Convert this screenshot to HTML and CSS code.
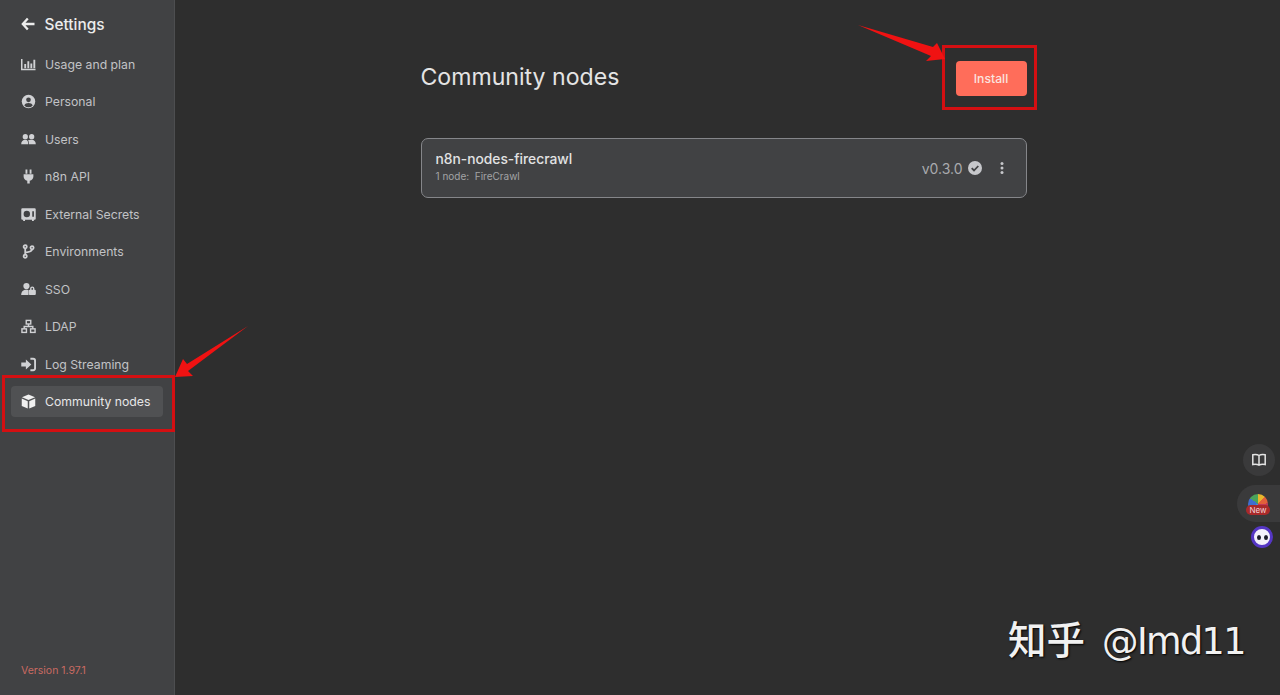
FILE: index.html
```html
<!DOCTYPE html>
<html lang="en">
<head>
<meta charset="utf-8">
<title>Community nodes</title>
<link rel="stylesheet" href="styles.css">
</head>
<body>
<div class="app">
  <aside class="sidebar">
    <div class="side-head">
      <svg class="back" viewBox="0 0 14 14"><path d="M6.800 1.400 1.800 7l5 5.600M2 7h11.500" fill="none" stroke="currentColor" stroke-width="2.300"/></svg>
      <span>Settings</span>
    </div>
    <nav class="menu">
      <a class="item"><svg class="ic" viewBox="0 0 16 16"><path d="M.8 2v11.200h14.700" fill="none" stroke="currentColor" stroke-width="1.600"/><path d="M3.500 7.500h2V12h-2zM6.800 4.500h2V12h-2zM10 7h2v5h-2zM13.200 3h2v9h-2z" fill="currentColor"/></svg>Usage and plan</a>
      <a class="item"><svg class="ic" viewBox="0 0 16 16"><circle cx="8" cy="8" r="7.200" fill="currentColor"/><circle cx="8" cy="6.200" r="2.500" fill="#414244"/><path d="M3.500 12.200c.8-1.800 2.400-2.500 4.500-2.500s3.700.7 4.500 2.500a6 6 0 0 1-9 0z" fill="#414244"/></svg>Personal</a>
      <a class="item"><svg class="ic" viewBox="0 0 16 16"><circle cx="4.600" cy="5" r="2.800" fill="currentColor"/><circle cx="11.400" cy="5" r="2.800" fill="currentColor"/><path d="M.2 13c0-3 1.800-4.700 4.400-4.700S7.700 10 7.700 13zM8.500 13c0-2-.4-3.400-1-4.200 1-.4 2.600-.6 3.900-.5 2.500 0 4.400 1.700 4.400 4.700z" fill="currentColor"/></svg>Users</a>
      <a class="item"><svg class="ic" viewBox="0 0 16 16"><path d="M4.800.5h2v4.500h-2zM9.200.5h2v4.500h-2zM2.800 5.500h10.400V8c0 2.500-1.600 4-3.900 4.400V15.500H6.700v-3.100C4.400 12 2.800 10.500 2.800 8z" fill="currentColor"/></svg>n8n API</a>
      <a class="item"><svg class="ic" viewBox="0 0 16 16"><path fill-rule="evenodd" d="M1.500 1.200h13a1.200 1.200 0 0 1 1.200 1.200v10a1.200 1.200 0 0 1-1.200 1.200h-.8v1.200h-2v-1.200H4.300v1.200h-2v-1.200h-.8a1.200 1.200 0 0 1-1.200-1.200v-10a1.200 1.200 0 0 1 1.200-1.200zM6.200 4a3.400 3.400 0 1 0 0 6.800 3.400 3.400 0 0 0 0-6.800zm5.800.500v5.800h1.800V4.500z" fill="currentColor"/></svg>External Secrets</a>
      <a class="item"><svg class="ic" viewBox="0 0 16 16"><g fill="none" stroke="currentColor" stroke-width="1.900"><circle cx="4.500" cy="2.900" r="1.700"/><circle cx="4.500" cy="13.100" r="1.700"/><circle cx="11.800" cy="4" r="1.700"/><path d="M4.500 4.600v6.800M11.800 5.600c0 2.400-3 3-7.300 3.600"/></g></svg>Environments</a>
      <a class="item"><svg class="ic" viewBox="0 0 16 16"><circle cx="5.800" cy="4.300" r="3.300" fill="currentColor"/><path d="M.2 13.800c0-3.500 2.200-5.500 5.600-5.500 1 0 1.700.2 2.200.4v5.100z" fill="currentColor"/><path fill-rule="evenodd" d="M9.300 8.300h.4V7a2.300 2.300 0 0 1 4.600 0v1.300h.5a1 1 0 0 1 1 .9v3.700a1 1 0 0 1-1 .9H9.300a1 1 0 0 1-1-.9V9.200a1 1 0 0 1 1-.9zm1.900 0h1.600V7a.8.8 0 0 0-1.600 0z" fill="currentColor"/></svg>SSO</a>
      <a class="item"><svg class="ic" viewBox="0 0 16 16"><g fill="none" stroke="currentColor" stroke-width="1.500"><rect x="5.600" y="1.500" width="4.800" height="3.800"/><rect x="1" y="10.500" width="4.800" height="3.800"/><rect x="10.200" y="10.500" width="4.800" height="3.800"/><path d="M8 5.300v2.700M3.400 10.500V8h9.200v2.500"/></g></svg>LDAP</a>
      <a class="item"><svg class="ic" viewBox="0 0 16 16"><path d="M.3 5.800h4.900V2.700L11 8l-5.800 5.300V10.200H.3z" fill="currentColor"/><path d="M10 1.900h3a2 2 0 0 1 2 2v8.200a2 2 0 0 1-2 2h-3" fill="none" stroke="currentColor" stroke-width="2"/></svg>Log Streaming</a>
      <a class="item active"><svg class="ic" viewBox="0 0 16 16"><path d="M8 .5 15 3.400 8 6.300 1 3.400z" fill="currentColor"/><path d="M.8 4.900l6.400 2.700v7.900L.8 12.800zM15.200 4.900 8.800 7.600v7.900l6.400-2.700z" fill="currentColor"/></svg>Community nodes</a>
    </nav>
    <div class="version">Version 1.97.1</div>
  </aside>

  <main class="main">
    <div class="content">
      <header class="page-head">
        <h1>Community nodes</h1>
        <button class="install">Install</button>
      </header>
      <section class="card">
        <div class="card-info">
          <div class="pkg">n8n-nodes-firecrawl</div>
          <div class="sub">1 node:&nbsp; FireCrawl</div>
        </div>
        <div class="card-meta">
          <span class="ver">v0.3.0</span>
          <svg class="check" viewBox="0 0 14 14"><circle cx="7" cy="7" r="7" fill="currentColor"/><path d="M3.700 7.200 6 9.500l4.300-4.500" fill="none" stroke="#414244" stroke-width="1.800"/></svg>
          <svg class="dots" viewBox="0 0 4 14"><circle cx="2" cy="2.500" r="1.500"/><circle cx="2" cy="7" r="1.500"/><circle cx="2" cy="11.500" r="1.500"/></svg>
        </div>
      </section>
    </div>
  </main>
</div>

<div class="mark mark-install"></div>
<div class="mark mark-nav"></div>
<svg class="arrows" viewBox="0 0 1280 695">
  <path d="M858 25 933 47 937 43 945 59 926 61 931 56z" fill="#f01212"/>
  <path d="M248 326 187 364 183 359 175 377 193 376 188 371z" fill="#f01212"/>
</svg>

<div class="float-book">
  <svg viewBox="0 0 16 16"><path d="M8 3.500C6.500 2.500 4 2.300 1.800 2.800v9.700c2.200-.5 4.700-.3 6.200.7 1.500-1 4-1.200 6.200-.7V2.800C12 2.300 9.500 2.500 8 3.500zM8 3.500v9.700" fill="none" stroke="currentColor" stroke-width="1.500"/></svg>
</div>
<div class="float-tray">
  <div class="ball"><span class="new">New</span></div>
</div>
<div class="bot"><i></i><i></i></div>

<div class="watermark"><span class="wm-cjk">知乎</span><span class="wm-id">@Imd11</span></div>
</body>
</html>
```
FILE: styles.css
```css
* { box-sizing: border-box; }
html, body { margin: 0; height: 100%; }
body {
  background: #2e2e2e;
  font-family: Inter, "Liberation Sans", sans-serif;
  overflow: hidden;
  position: relative;
}
.app { display: flex; height: 695px; }
.sidebar {
  width: 175px;
  flex: none;
  background: #414244;
  border-right: 1px solid #4d4e50;
  display: flex;
  flex-direction: column;
  padding: 0 11px 18px;
}
.side-head {
  height: 48.500px;
  display: flex;
  align-items: center;
  gap: 10px;
  padding-left: 9.500px;
  color: #ececec;
  font-size: 15.400px;
  font-weight: 500;
}
.back { width: 14px; height: 14px; }
.menu { display: flex; flex-direction: column; gap: 6.500px; flex: 1; }
.item {
  height: 31px;
  display: flex;
  align-items: center;
  gap: 9.500px;
  padding-left: 9.500px;
  border-radius: 4px;
  color: #c2c3c6;
  font-size: 12.250px;
  width: 152px;
  white-space: nowrap;
}
.ic { width: 15px; height: 15px; flex: none; color: #d0d1d4; }
.item.active { background: #505153; color: #e6e6e7; }
.item.active .ic { color: #f0f0f0; }
.version { padding-left: 10px; font-size: 10.500px; color: #c96a62; }

.main { flex: 1; display: flex; padding-left: 246px; }
.content { width: 606px; margin-left: -0.500px; }
.page-head {
  height: 138px;
  display: flex;
  justify-content: space-between;
  align-items: center;
  padding-top: 18px;
}
.page-head h1 { margin: 0; font-size: 23.100px; font-weight: 400; color: #e4e4e4; position: relative; top: -1px; }
.install {
  width: 71px;
  height: 35px;
  border: 0;
  border-radius: 4px;
  background: #ff6d5a;
  color: #fbe3df;
  font: 500 12.200px Inter, "Liberation Sans", sans-serif;
}
.card {
  height: 60px;
  background: #414244;
  border: 1px solid #85868a;
  border-radius: 7px;
  display: flex;
  justify-content: space-between;
  align-items: center;
  padding: 0 22px 0 14px;
}
.card-info { position: relative; top: -1.500px; }
.pkg { font-size: 13.800px; font-weight: 500; color: #e2e2e3; margin-bottom: 3px; }
.sub { font-size: 10px; color: #a3a4a6; }
.card-meta { display: flex; align-items: center; color: #a9aaae; }
.ver { font-size: 14px; margin-right: 5px; }
.check { width: 14px; height: 14px; color: #c6c7cb; margin-right: 18px; }
.dots { width: 4px; height: 14px; fill: #c6c7cb; }

.mark { position: absolute; border: 3px solid #d40f12; }
.mark-install { left: 942px; top: 45px; width: 95px; height: 65px; }
.mark-nav { left: 2px; top: 375px; width: 173px; height: 57px; }
.arrows { position: absolute; left: 0; top: 0; width: 1280px; height: 695px; pointer-events: none; }

.float-book {
  position: absolute;
  left: 1243px;
  top: 444px;
  width: 32px;
  height: 32px;
  border-radius: 50%;
  background: #3a3a3b;
  color: #e4e4e4;
  display: flex;
  align-items: center;
  justify-content: center;
}
.float-book svg { width: 16px; height: 16px; }
.float-tray {
  position: absolute;
  left: 1237px;
  top: 485px;
  width: 43px;
  height: 37px;
  border-radius: 19px 0 0 19px;
  background: #3a3a3b;
  padding: 9px 0 0 11px;
}
.ball {
  position: relative;
  width: 20px;
  height: 20px;
  border-radius: 50%;
  background: conic-gradient(#e8b62c 0 12%, #e2603a 12% 24%, #c23a55 24% 40%, #3f8ae0 40% 70%, #3f6fd0 70% 85%, #4aa35a 85%);
}
.new {
  position: absolute;
  left: -2px;
  top: 11px;
  width: 24px;
  height: 10px;
  border-radius: 5px;
  background: #a92a2a;
  color: #f2d4d4;
  font-size: 8px;
  line-height: 10px;
  text-align: center;
}
.bot {
  position: absolute;
  left: 1251px;
  top: 526px;
  width: 22px;
  height: 22px;
  border-radius: 50%;
  background: #f4f1fb;
  border: 3px solid #5536c4;
  display: flex;
  align-items: center;
  justify-content: center;
  gap: 3px;
}
.bot i { width: 4px; height: 5px; border-radius: 50%; background: #1c1c2a; }

.watermark {
  position: absolute;
  left: 1008px;
  top: 613px;
  display: flex;
  align-items: baseline;
  gap: 17px;
  color: #f1f1f1;
  line-height: 48px;
  white-space: nowrap;
  text-shadow: 1px 1px 2px #000;
}
.wm-cjk { font-family: "Noto Sans CJK SC", sans-serif; font-size: 38.500px; font-weight: 500; }
.wm-id { font-family: "DejaVu Sans", sans-serif; font-size: 36.500px; letter-spacing: -1.600px; }
```
